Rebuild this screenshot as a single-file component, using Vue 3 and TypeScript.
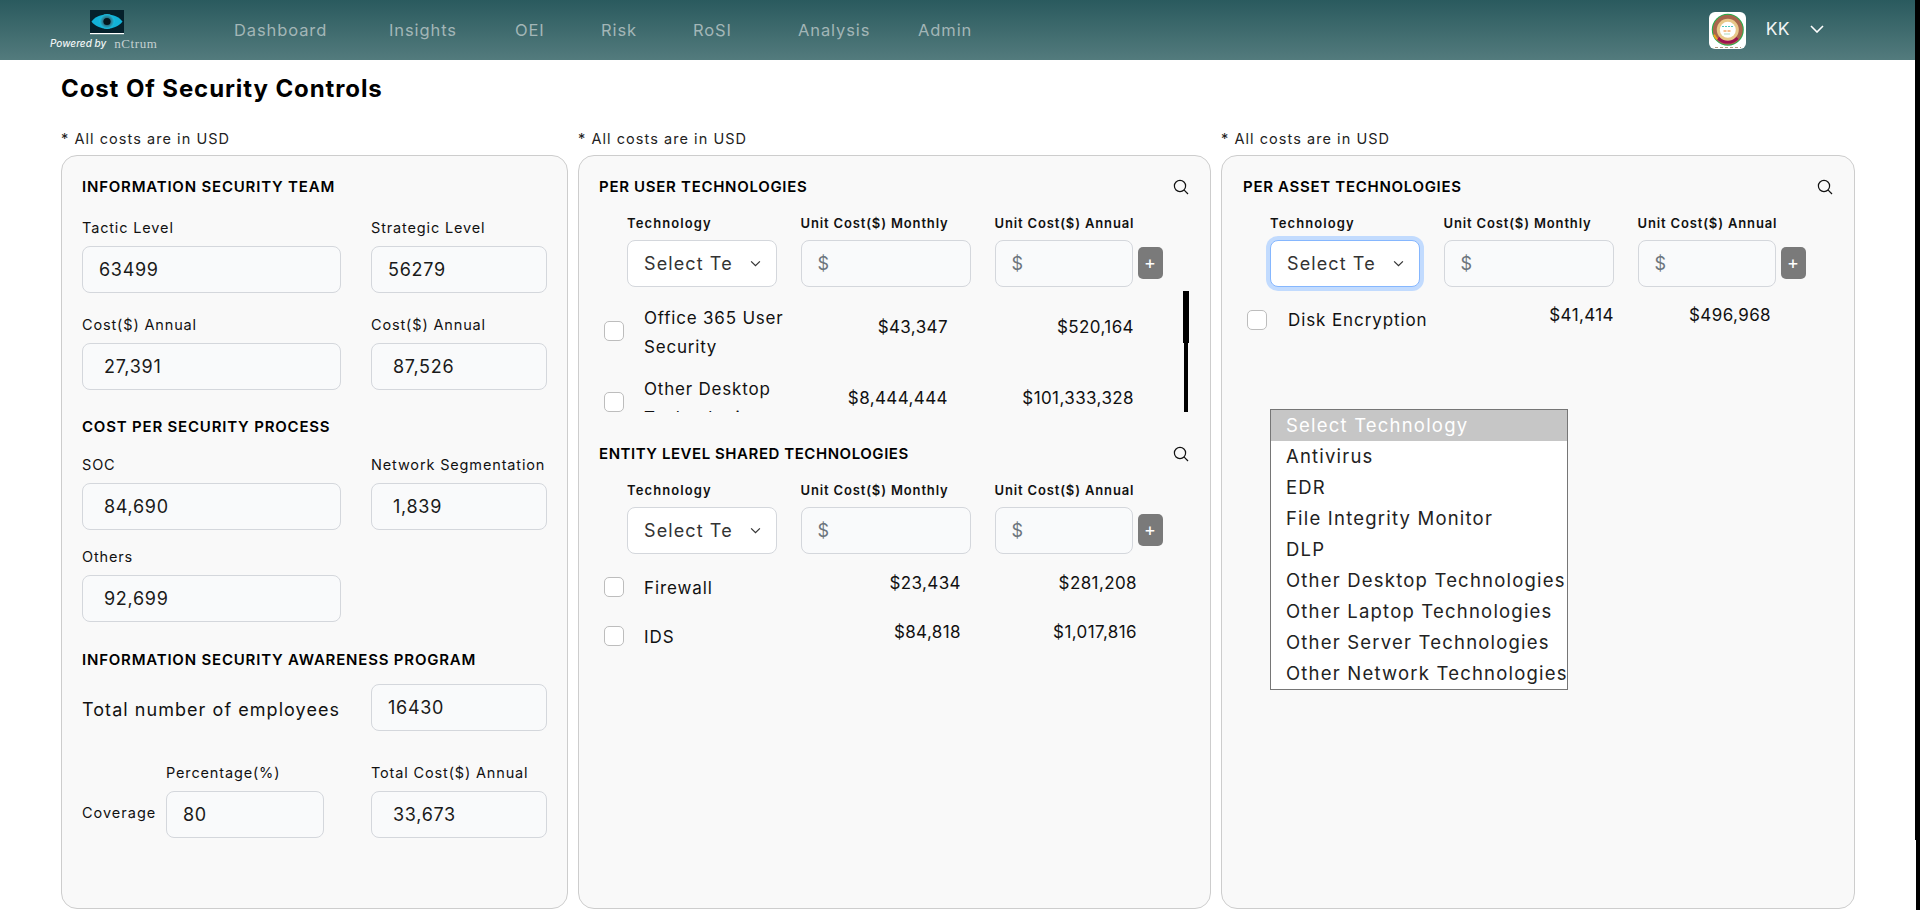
<script setup lang="ts">
const navItems = ['Dashboard', 'Insights', 'OEI', 'Risk', 'RoSI', 'Analysis', 'Admin']

const techOptions = [
  'Select Technology',
  'Antivirus',
  'EDR',
  'File Integrity Monitor',
  'DLP',
  'Other Desktop Technologies',
  'Other Laptop Technologies',
  'Other Server Technologies',
  'Other Network Technologies'
]
</script>

<template>
  <div class="page">
    <header class="topbar">
      <div class="brand">
        <svg class="eye" viewBox="0 0 34 25" width="34" height="25">
          <defs>
            <radialGradient id="iris" cx="50%" cy="50%" r="50%">
              <stop offset="0" stop-color="#0a2c3a" />
              <stop offset="0.6" stop-color="#2a7f96" />
              <stop offset="1" stop-color="#18c0e4" />
            </radialGradient>
          </defs>
          <rect width="34" height="23" fill="#05202b" />
          <path d="M1.5 11.5C8 2 26 2 32.5 11.5C26 21 8 21 1.5 11.5Z" fill="#12b2d8" />
          <circle cx="17" cy="11.5" r="7.5" fill="url(#iris)" />
          <circle cx="17" cy="11.5" r="3.6" fill="#03141c" />
          <rect y="23" width="34" height="1.2" fill="#fff" />
        </svg>
        <div class="powered"><em>Powered by</em><span>nCtrum</span></div>
      </div>
      <nav class="nav">
        <a v-for="item in navItems" :key="item">{{ item }}</a>
      </nav>
      <div class="user">
        <div class="avatar">
          <svg viewBox="0 0 37 37" width="37" height="37">
            <circle cx="18.8" cy="17.8" r="16" fill="#22b14c" />
            <circle cx="18.8" cy="17.8" r="15" fill="#a8664c" />
            <path d="M8 27a15 15 0 0 0 21.6 0l-3.4-3a10.6 10.6 0 0 1-14.8 0Z" fill="#9c1150" />
            <path d="M4 23a15 15 0 0 0 3.6 5l1.4-1.4a14 14 0 0 1-3-4.4Z" fill="#f0a020" />
            <circle cx="18.8" cy="17.8" r="11" fill="#e8c88a" />
            <circle cx="18.8" cy="17.8" r="8" fill="#fff" />
            <path d="M13 14.5h11" stroke="#4cc9c0" stroke-width="1" stroke-dasharray="2 1" />
            <path d="M14.5 19h8" stroke="#f08020" stroke-width="1.2" stroke-dasharray="3 1" />
            <path d="M15.5 22h6" stroke="#30a060" stroke-width="0.8" stroke-dasharray="1 1" />
            <path d="M6 35.5h26" stroke="#b09a80" stroke-width="1" stroke-dasharray="3 2" />
          </svg>
        </div>
        <span class="user-name">KK</span>
        <svg class="user-caret" viewBox="0 0 14 8" width="14" height="8">
          <path d="M1 1l6 6 6-6" fill="none" stroke="#fff" stroke-width="1.6" />
        </svg>
      </div>
    </header>

    <main class="content">
      <h1 class="title">Cost Of Security Controls</h1>
      <div class="columns">
        <div class="col">
          <p class="note">* All costs are in USD</p>
          <section class="card left-card">
            <h2 class="heading">INFORMATION SECURITY TEAM</h2>
            <div class="pair pair-first">
              <div>
                <label>Tactic Level</label>
                <div class="field">63499</div>
              </div>
              <div>
                <label>Strategic Level</label>
                <div class="field">56279</div>
              </div>
            </div>
            <div class="pair">
              <div>
                <label>Cost($) Annual</label>
                <div class="field money">27,391</div>
              </div>
              <div>
                <label>Cost($) Annual</label>
                <div class="field money">87,526</div>
              </div>
            </div>

            <h2 class="heading heading-gap">COST PER SECURITY PROCESS</h2>
            <div class="pair process-first">
              <div>
                <label>SOC</label>
                <div class="field money">84,690</div>
              </div>
              <div>
                <label>Network Segmentation</label>
                <div class="field money">1,839</div>
              </div>
            </div>
            <div class="pair others">
              <div>
                <label>Others</label>
                <div class="field money">92,699</div>
              </div>
            </div>

            <h2 class="heading heading-gap heading-awareness">INFORMATION SECURITY AWARENESS PROGRAM</h2>
            <div class="pair employees">
              <span class="employees-label">Total number of employees</span>
              <div class="field">16430</div>
            </div>
            <div class="pair coverage">
              <div class="coverage-left">
                <span class="coverage-label">Coverage</span>
                <div class="coverage-input">
                  <label>Percentage(%)</label>
                  <div class="field">80</div>
                </div>
              </div>
              <div>
                <label>Total Cost($) Annual</label>
                <div class="field money">33,673</div>
              </div>
            </div>
          </section>
        </div>

        <div class="col">
          <p class="note">* All costs are in USD</p>
          <section class="card tech-card">
            <div class="tech-head">
              <h2 class="heading">PER USER TECHNOLOGIES</h2>
              <svg class="search" viewBox="0 0 16 16" width="16" height="16">
                <circle cx="7" cy="7" r="5.6" fill="none" stroke="#111" stroke-width="1.2" />
                <path d="M11.2 11.2L15 15" stroke="#111" stroke-width="1.2" />
              </svg>
            </div>
            <div class="tech-form">
              <div class="tf-col">
                <label class="tech-label">Technology</label>
                <div class="select">
                  <span class="select-text">Select Te</span>
                  <svg viewBox="0 0 12 8" width="11" height="7"><path d="M1 1.5l5 5 5-5" fill="none" stroke="#333" stroke-width="1.4" /></svg>
                </div>
              </div>
              <div class="tf-col">
                <label class="tech-label cost-label">Unit Cost($) Monthly</label>
                <div class="field dollar">$</div>
              </div>
              <div class="tf-col">
                <label class="tech-label cost-label">Unit Cost($) Annual</label>
                <div class="field dollar">$</div>
              </div>
              <button type="button" class="add">+</button>
            </div>
            <div class="tech-list">
              <div class="tech-rows">
                <div class="tech-row">
                  <span class="check"></span>
                  <span class="tech-name">Office 365 User Security</span>
                  <span class="amt">$43,347</span>
                  <span class="amt">$520,164</span>
                </div>
                <div class="tech-row">
                  <span class="check"></span>
                  <span class="tech-name">Other Desktop Technologies</span>
                  <span class="amt">$8,444,444</span>
                  <span class="amt">$101,333,328</span>
                </div>
              </div>
              <div class="scroll-track"><div class="scroll-thumb"></div></div>
            </div>

            <div class="tech-head shared-head">
              <h2 class="heading heading-entity">ENTITY LEVEL SHARED TECHNOLOGIES</h2>
              <svg class="search" viewBox="0 0 16 16" width="16" height="16">
                <circle cx="7" cy="7" r="5.6" fill="none" stroke="#111" stroke-width="1.2" />
                <path d="M11.2 11.2L15 15" stroke="#111" stroke-width="1.2" />
              </svg>
            </div>
            <div class="tech-form">
              <div class="tf-col">
                <label class="tech-label">Technology</label>
                <div class="select">
                  <span class="select-text">Select Te</span>
                  <svg viewBox="0 0 12 8" width="11" height="7"><path d="M1 1.5l5 5 5-5" fill="none" stroke="#333" stroke-width="1.4" /></svg>
                </div>
              </div>
              <div class="tf-col">
                <label class="tech-label cost-label">Unit Cost($) Monthly</label>
                <div class="field dollar">$</div>
              </div>
              <div class="tf-col">
                <label class="tech-label cost-label">Unit Cost($) Annual</label>
                <div class="field dollar">$</div>
              </div>
              <button type="button" class="add">+</button>
            </div>
            <div class="shared-rows">
              <div class="shared-row">
                <span class="check"></span>
                <span class="shared-name">Firewall</span>
                <span class="amt small-amt">$23,434</span>
                <span class="amt small-amt">$281,208</span>
              </div>
              <div class="shared-row">
                <span class="check"></span>
                <span class="shared-name">IDS</span>
                <span class="amt small-amt">$84,818</span>
                <span class="amt small-amt">$1,017,816</span>
              </div>
            </div>
          </section>
        </div>

        <div class="col">
          <p class="note">* All costs are in USD</p>
          <section class="card tech-card asset-card">
            <div class="tech-head">
              <h2 class="heading">PER ASSET TECHNOLOGIES</h2>
              <svg class="search" viewBox="0 0 16 16" width="16" height="16">
                <circle cx="7" cy="7" r="5.6" fill="none" stroke="#111" stroke-width="1.2" />
                <path d="M11.2 11.2L15 15" stroke="#111" stroke-width="1.2" />
              </svg>
            </div>
            <div class="tech-form">
              <div class="tf-col">
                <label class="tech-label">Technology</label>
                <div class="select focused">
                  <span class="select-text">Select Te</span>
                  <svg viewBox="0 0 12 8" width="11" height="7"><path d="M1 1.5l5 5 5-5" fill="none" stroke="#333" stroke-width="1.4" /></svg>
                </div>
              </div>
              <div class="tf-col">
                <label class="tech-label cost-label">Unit Cost($) Monthly</label>
                <div class="field dollar">$</div>
              </div>
              <div class="tf-col">
                <label class="tech-label cost-label">Unit Cost($) Annual</label>
                <div class="field dollar">$</div>
              </div>
              <button type="button" class="add">+</button>
            </div>
            <div class="asset-row">
              <span class="check"></span>
              <span class="asset-name">Disk Encryption</span>
              <span class="amt asset-amt">$41,414</span>
              <span class="amt asset-amt">$496,968</span>
            </div>
            <ul class="dropdown">
              <li v-for="(opt, i) in techOptions" :key="opt" :class="{ active: i === 0 }">{{ opt }}</li>
            </ul>
          </section>
        </div>
      </div>
    </main>

    <div class="page-scroll"><div class="page-thumb"></div></div>
  </div>
</template>

<style>
html,
body {
  margin: 0;
  background: #fff;
}
</style>

<style scoped>
.page {
  position: relative;
  width: 1920px;
  height: 910px;
  overflow: hidden;
  font-family: Inter, 'Noto Sans', sans-serif;
  color: #111;
  background: #fff;
}
.page-scroll {
  position: absolute;
  top: 0;
  right: 0;
  bottom: 0;
  width: 4px;
  background: #000;
}
.page-thumb {
  position: absolute;
  top: 0;
  right: 0;
  width: 5px;
  height: 840px;
  background: #000;
}
.topbar {
  height: 60px;
  display: flex;
  align-items: center;
  background: linear-gradient(180deg, #2a5a5e 0%, #537b7d 100%);
}
.brand {
  width: 234px;
  height: 60px;
  flex: none;
  display: flex;
  flex-direction: column;
  align-items: flex-start;
  padding: 10px 0 0 50px;
  box-sizing: border-box;
}
.eye {
  margin-left: 40px;
  display: block;
}
.powered {
  margin-top: 2px;
  display: flex;
  gap: 8px;
  align-items: center;
  font-size: 10px;
  line-height: 13px;
  white-space: nowrap;
}
.powered em {
  color: #eef3f3;
  font-weight: 500;
}
.powered span {
  font-family: 'Liberation Serif', serif;
  color: #c4d0d0;
  font-size: 13px;
  letter-spacing: 0.6px;
}
.nav {
  display: grid;
  grid-template-columns: 155px 126px 86px 92px 105px 120px 60px;
  font-size: 16.5px;
  letter-spacing: 0.9px;
  color: #a3b6b7;
}
.user {
  margin-left: auto;
  display: flex;
  align-items: center;
  padding-right: 96px;
}
.avatar {
  width: 37px;
  height: 37px;
  background: #fff;
  border-radius: 6px;
  overflow: hidden;
}
.avatar svg {
  display: block;
}
.user-name {
  margin: 0 20px 4px 20px;
  font-size: 17.5px;
  letter-spacing: 0.4px;
  color: #f1f4f4;
}
.user-caret {
  margin-bottom: 2px;
}
.content {
  padding-left: 61px;
}
.title {
  margin: 0;
  padding-top: 14px;
  height: 44px;
  font-size: 24px;
  line-height: 29px;
  font-weight: 700;
  color: #000;
  letter-spacing: 0.9px;
}
.columns {
  display: grid;
  grid-template-columns: 506.5px 632.5px 634px;
  column-gap: 10.5px;
  margin-top: 11px;
}
.col {
  min-width: 0;
}
.note {
  margin: 0 0 6px;
  height: 20px;
  line-height: 20px;
  font-size: 14.5px;
  letter-spacing: 1.05px;
  color: #222;
}
.card {
  position: relative;
  height: 754px;
  box-sizing: border-box;
  background: #f9f9f9;
  border: 1px solid #cdcdcd;
  border-radius: 16px;
}
.heading {
  margin: 0;
  font-size: 15px;
  line-height: 20px;
  font-weight: 600;
  letter-spacing: 0.8px;
  color: #000;
  white-space: nowrap;
}
.left-card {
  padding: 21px 20px 0;
}
.heading-gap {
  margin-top: 27px;
}
.heading-awareness {
  margin-top: 28px;
}
.pair {
  display: grid;
  grid-template-columns: 259px 176px;
  column-gap: 30px;
  margin-top: 22px;
}
.pair-first {
  margin-top: 21px;
}
.process-first {
  margin-top: 18px;
}
.others {
  margin-top: 17px;
}
label {
  display: block;
  font-size: 14.5px;
  line-height: 20px;
  letter-spacing: 0.85px;
  color: #111;
  white-space: nowrap;
}
.field {
  box-sizing: border-box;
  height: 47px;
  margin-top: 8px;
  padding: 0 16px;
  display: flex;
  align-items: center;
  font-size: 18px;
  letter-spacing: 0.7px;
  color: #1a1a1a;
  background: #f9fafb;
  border: 1px solid #d4d7dc;
  border-radius: 8px;
}
.money {
  padding-left: 21px;
}
.employees {
  margin-top: 14px;
  align-items: center;
}
.employees .field {
  margin-top: 0;
}
.employees-label {
  padding-top: 4px;
  font-size: 18px;
  letter-spacing: 1.05px;
  white-space: nowrap;
  color: #111;
}
.coverage {
  margin-top: 32px;
  align-items: start;
}
.coverage-left {
  display: flex;
  align-items: flex-end;
  gap: 9px;
}
.coverage-label {
  flex: none;
  width: 75px;
  margin-bottom: 2px;
  font-size: 14.5px;
  letter-spacing: 1px;
  line-height: 47px;
  white-space: nowrap;
}
.coverage-input {
  width: 158px;
  flex: none;
}
.tech-card {
  padding: 21px 20px 0;
}
.tech-card .heading {
  letter-spacing: 0.7px;
}
.tech-card .heading-entity {
  letter-spacing: 0.55px;
}
.asset-card .tech-head .heading {
  margin-left: 1px;
}
.tech-head {
  display: flex;
  align-items: center;
  justify-content: space-between;
  height: 20px;
}
.search {
  margin-right: 1px;
}
.tech-form {
  display: grid;
  grid-template-columns: 149.5px 170px 138px 25px;
  column-gap: 24px;
  margin: 17px 0 0 28px;
  width: max-content;
  align-items: end;
}
.tech-form .add {
  margin-left: -19px;
  margin-bottom: 8px;
}
.tech-label {
  font-size: 13px;
  line-height: 18px;
  font-weight: 600;
  letter-spacing: 1.1px;
  color: #111;
}
.cost-label {
  letter-spacing: 0.85px;
}
.select {
  box-sizing: border-box;
  height: 47px;
  margin-top: 8px;
  display: flex;
  align-items: center;
  justify-content: space-between;
  padding: 0 15px 0 16px;
  font-size: 18px;
  letter-spacing: 1.1px;
  color: #333;
  background: #fff;
  border: 1px solid #d4d7dc;
  border-radius: 8px;
}
.select-text {
  white-space: nowrap;
  overflow: hidden;
}
.select.focused {
  border-color: #86b7fe;
  box-shadow: 0 0 0 4px #c2dbfe;
}
.dollar {
  color: #6c757d;
}
.add {
  width: 25px;
  height: 32px;
  padding: 0;
  border: 0;
  border-radius: 5px;
  background: #7a7a7a;
  color: #fff;
  font-size: 18px;
  line-height: 30px;
  font-family: inherit;
}
.tech-list {
  position: relative;
  height: 121px;
  margin-top: 4px;
  overflow: hidden;
}
.tech-rows {
  padding-top: 13px;
}
.tech-row {
  display: grid;
  grid-template-columns: 20px 165px 159px 186px;
  height: 57px;
  margin-bottom: 14px;
  margin-left: 5px;
  align-items: center;
  font-size: 17px;
}
.tech-row .check {
  margin-top: -3px;
}
.tech-name {
  margin-left: 20px;
  width: 150px;
  line-height: 28.5px;
  letter-spacing: 0.8px;
}
.amt {
  margin-top: -11px;
  text-align: right;
  font-size: 17px;
  letter-spacing: 0.4px;
  white-space: nowrap;
}
.scroll-track {
  position: absolute;
  right: 2px;
  top: 0;
  bottom: 0;
  width: 4px;
  background: #000;
}
.scroll-thumb {
  position: absolute;
  left: -1px;
  top: 0;
  width: 6px;
  height: 52px;
  background: #000;
}
.check {
  display: block;
  box-sizing: border-box;
  width: 20px;
  height: 20px;
  background: #fff;
  border: 1px solid #bdbdbd;
  border-radius: 5px;
}
.shared-head {
  margin-top: 32px;
}
.shared-rows {
  margin-top: 8px;
  margin-left: 5px;
}
.shared-row {
  display: grid;
  grid-template-columns: 20px 177px 160px 176px;
  height: 49px;
  align-items: center;
}
.shared-name {
  margin-left: 20px;
  padding-top: 2px;
  font-size: 17px;
  letter-spacing: 0.9px;
}
.small-amt {
  margin-top: -8px;
}
.asset-row {
  display: grid;
  grid-template-columns: 20px 187px 160px 157px;
  align-items: center;
  margin: 21px 0 0 5px;
  height: 24px;
}
.asset-name {
  margin-left: 21px;
  font-size: 17px;
  letter-spacing: 0.9px;
  white-space: nowrap;
}
.asset-amt {
  margin-top: -10px;
}
.dropdown {
  position: absolute;
  left: 48px;
  top: 253px;
  width: 298px;
  margin: 0;
  padding: 0;
  list-style: none;
  background: #fff;
  border: 1px solid #767676;
  box-sizing: border-box;
}
.dropdown li {
  height: 31px;
  line-height: 31px;
  padding-left: 15px;
  font-size: 18.5px;
  letter-spacing: 1.2px;
  white-space: nowrap;
  color: #222;
}
.dropdown li.active {
  background: #c6c6c6;
  color: #fff;
}
</style>
